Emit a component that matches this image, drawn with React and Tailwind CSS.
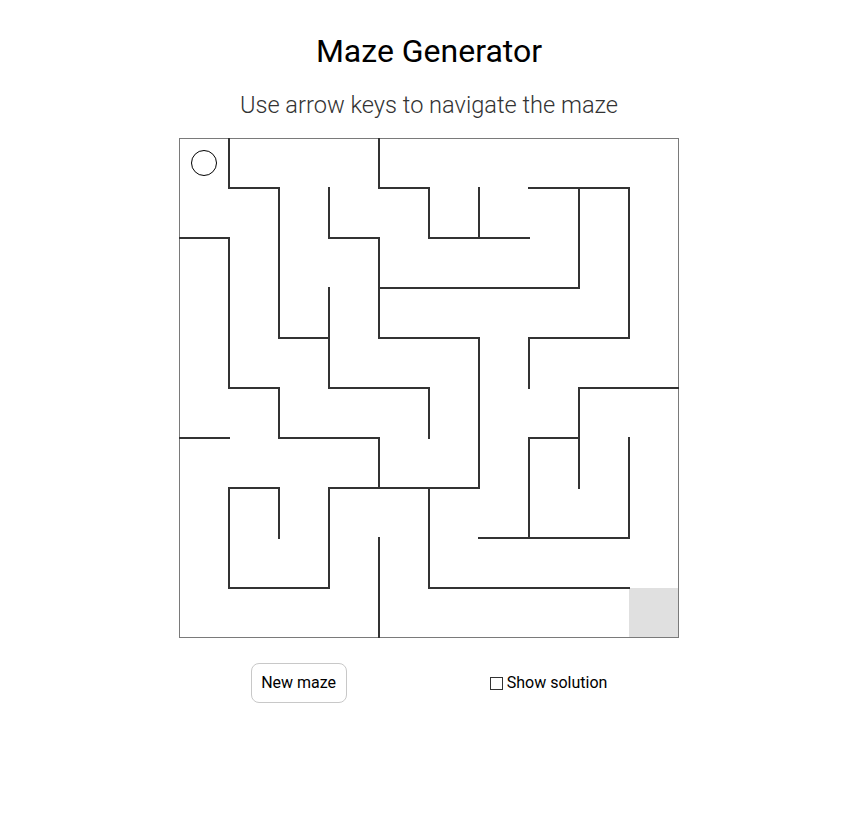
import React from "react";

const W = [
  ["v", 1, 0, 1], ["h", 1, 1, 2], ["v", 2, 1, 4], ["h", 4, 2, 3],
  ["v", 4, 0, 1], ["h", 1, 4, 5], ["v", 5, 1, 2], ["h", 2, 5, 7],
  ["v", 6, 1, 2], ["h", 1, 7, 9], ["v", 8, 1, 3], ["v", 9, 1, 4],
  ["v", 3, 1, 2], ["h", 2, 3, 4], ["v", 4, 2, 4], ["h", 3, 4, 8],
  ["h", 4, 4, 6], ["v", 6, 4, 7], ["h", 2, 0, 1], ["v", 1, 2, 5],
  ["h", 5, 1, 2], ["v", 2, 5, 6], ["h", 6, 2, 4], ["v", 4, 6, 7],
  ["v", 3, 3, 5], ["h", 5, 3, 5], ["v", 5, 5, 6], ["h", 4, 7, 9],
  ["v", 7, 4, 5], ["h", 5, 8, 10], ["v", 8, 5, 7], ["h", 6, 7, 8],
  ["v", 7, 6, 8], ["v", 9, 6, 8], ["h", 8, 6, 9], ["h", 6, 0, 1],
  ["h", 7, 1, 2], ["v", 2, 7, 8], ["v", 1, 7, 9], ["h", 9, 1, 3],
  ["v", 3, 7, 9], ["h", 7, 3, 6], ["v", 5, 7, 9], ["h", 9, 5, 9],
  ["v", 4, 8, 10],
];

function Maze() {
  return (
    <svg width="500" height="500" viewBox="0 0 500 500" className="block">
      <rect x="0" y="0" width="500" height="500" fill="#fff" />
      <rect x="450" y="450" width="49" height="49" fill="#e0e0e0" />
      <rect x="0.5" y="0.5" width="499" height="499" fill="none" stroke="#7a7a7a" strokeWidth="1" />
      {W.map(([t, a, b, c], i) =>
        t === "v" ? (
          <line key={i} x1={a * 50} x2={a * 50} y1={b * 50} y2={c * 50} stroke="#333" strokeWidth="2" strokeLinecap="square" />
        ) : (
          <line key={i} y1={a * 50} y2={a * 50} x1={b * 50} x2={c * 50} stroke="#333" strokeWidth="2" strokeLinecap="square" />
        )
      )}
      <circle cx="25" cy="25" r="12.5" fill="none" stroke="#000" strokeWidth="1" />
    </svg>
  );
}

export default function App() {
  return (
    <div className="min-h-[815px] w-full bg-white flex flex-col items-center font-['Roboto',sans-serif] text-black">
      <h1 className="mt-[31px] h-[40px] leading-[40px] text-[32px] font-normal">Maze Generator</h1>
      <p className="mt-[20px] h-[28px] leading-[28px] text-[23.6px] font-light text-[#333]">
        Use arrow keys to navigate the maze
      </p>
      <div className="mt-[19px]">
        <Maze />
      </div>
      <div className="mt-[25px] w-[500px] flex justify-around items-center">
        <button className="w-[96px] h-[40px] rounded-[8px] border border-[#c8c8c8] bg-white text-[16px] leading-none text-black">
          New maze
        </button>
        <label className="flex items-center text-[16px] leading-[20px]">
          <span className="w-[13px] h-[13px] border border-[#333] mr-[4px] inline-block" />
          Show solution
        </label>
      </div>
    </div>
  );
}
